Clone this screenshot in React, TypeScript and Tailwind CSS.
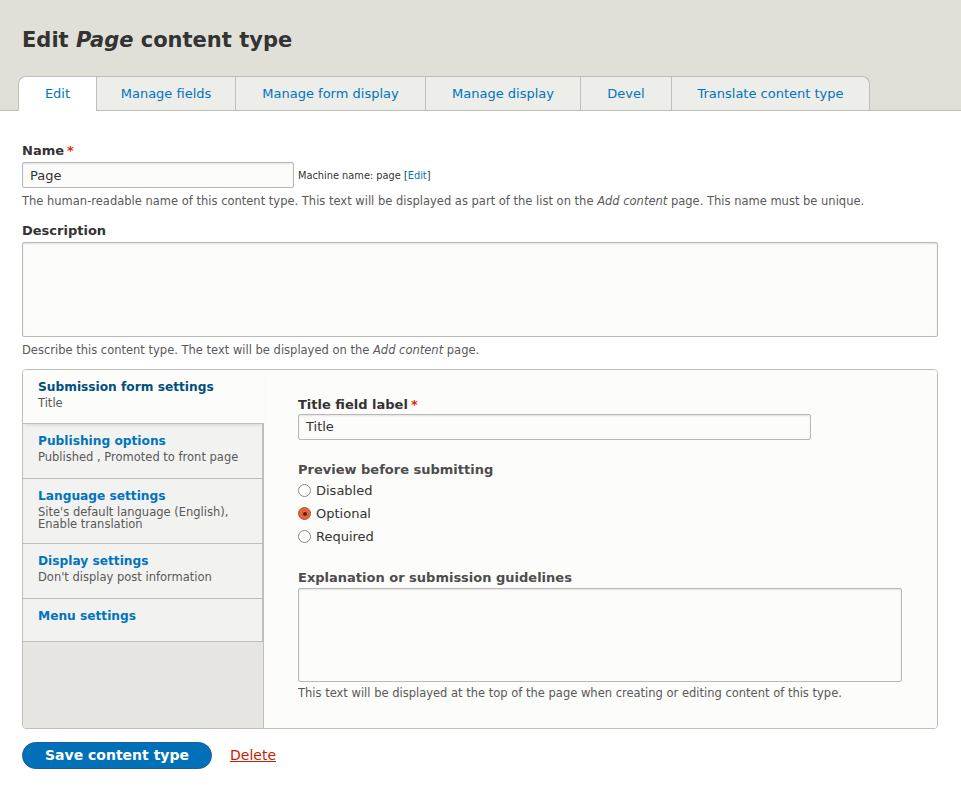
import React from "react";

const font = { fontFamily: '"DejaVu Sans", "Liberation Sans", sans-serif' };

function Tab({ label, active, last, w }: { label: string; active?: boolean; last?: boolean; w: string }) {
  return (
    <div
      className={
        "flex items-center justify-center border-t border-l border-[#bfbfba] text-[13px] text-[#0074bd] " +
        w +
        (active ? " bg-white rounded-tl-[8px] h-[35px] -mb-px" : " bg-[#ededea] h-[34px]") +
        (last ? " border-r rounded-tr-[8px]" : "")
      }
    >
      {label}
    </div>
  );
}

function Radio({ label, checked }: { label: string; checked?: boolean }) {
  return (
    <div className="flex items-center h-[23px] text-[13px] text-[#333]">
      {checked ? (
        <span className="w-[13px] h-[13px] rounded-full bg-[#e0663e] border border-[#c0502d] flex items-center justify-center mr-[5px]">
          <span className="w-[4px] h-[4px] rounded-full bg-[#5a2010]" />
        </span>
      ) : (
        <span className="w-[13px] h-[13px] rounded-full bg-white border border-[#8a8a8a] mr-[5px]" />
      )}
      <span>{label}</span>
    </div>
  );
}

function VTab({ title, sub, active, h }: { title: string; sub?: React.ReactNode; active?: boolean; h: string }) {
  return (
    <div
      className={
        "px-[15px] pt-[9px] border-b border-[#bfbfba] " +
        h +
        (active ? " bg-[#fcfcfa] mr-[-1px] relative z-10 shadow-[0_3px_4px_-2px_rgba(0,0,0,0.12)]" : " bg-[#f2f2f0] border-r border-[#bfbfba]")
      }
    >
      <div className={"text-[12.2px] font-bold leading-[16px] " + (active ? "text-[#004f80]" : "text-[#0074bd]")}>{title}</div>
      {sub && <div className="text-[11.5px] leading-[12px] text-[#595959] mt-[2px]">{sub}</div>}
    </div>
  );
}

export default function App() {
  return (
    <div className="w-[961px] min-h-[789px] bg-white text-[#333]" style={font}>
      <div className="bg-[#e0e0d8] border-b border-[#bfbfba] h-[111px] px-[22px] flex flex-col">
        <h1 className="text-[21px] font-bold text-[#333] mt-[26px] leading-[28px]">
          Edit <em>Page</em> content type
        </h1>
        <div className="flex mt-auto -ml-[4px]">
          <Tab label="Edit" active w="w-[78px]" />
          <Tab label="Manage fields" w="w-[139px]" />
          <Tab label="Manage form display" w="w-[190px]" />
          <Tab label="Manage display" w="w-[155px]" />
          <Tab label="Devel" w="w-[91px]" />
          <Tab label="Translate content type" last w="w-[199px]" />
        </div>
      </div>

      <div className="px-[22px] pt-[30px]">
        <div className="text-[13px] font-bold leading-[18px] mt-[1px]">
          Name<span className="text-[#e62600] ml-[3px]">*</span>
        </div>
        <div className="flex items-center mt-[2px]">
          <div className="w-[272px] h-[26px] border border-[#b8b8b8] rounded-[2px] bg-[#fcfcfa] text-[13px] flex items-center px-[7px] pt-[1px] shadow-[inset_0_1px_2px_rgba(0,0,0,0.1)]">
            Page
          </div>
          <span className="text-[9.8px] ml-[4px] mt-[3px]">
            Machine name: page [<span className="text-[#0074bd]">Edit</span>]
          </span>
        </div>
        <div className="text-[11.5px] text-[#595959] mt-[5px] leading-[16px]">
          The human-readable name of this content type. This text will be displayed as part of the list on the <em>Add content</em> page. This name must be unique.
        </div>

        <div className="text-[13px] font-bold leading-[18px] mt-[13px]">Description</div>
        <div className="w-[916px] h-[95px] border border-[#b8b8b8] rounded-[2px] bg-[#fcfcfa] mt-[2px] shadow-[inset_0_1px_2px_rgba(0,0,0,0.1)]" />
        <div className="text-[11.5px] text-[#595959] mt-[5px] leading-[16px]">
          Describe this content type. The text will be displayed on the <em>Add content</em> page.
        </div>

        <div className="mt-[11px] w-[916px] h-[360px] border border-[#bfbfba] rounded-[4px] flex overflow-hidden">
          <div className="w-[241px] bg-[#e6e5e1] flex flex-col shrink-0 border-r border-[#bfbfba]">
            <VTab title="Submission form settings" sub="Title" active h="h-[54px]" />
            <VTab title="Publishing options" sub="Published , Promoted to front page" h="h-[55px]" />
            <VTab
              title="Language settings"
              sub={
                <>
                  Site's default language (English),
                  <br />
                  Enable translation
                </>
              }
              h="h-[65px]"
            />
            <VTab title="Display settings" sub="Don't display post information" h="h-[55px]" />
            <VTab title="Menu settings" h="h-[43px]" />
          </div>
          <div className="flex-1 bg-[#fcfcfa] pl-[34px] pt-[27px]">
            <div className="text-[13px] font-bold leading-[16px]">
              Title field label<span className="text-[#e62600] ml-[3px]">*</span>
            </div>
            <div className="w-[513px] h-[26px] border border-[#b8b8b8] rounded-[2px] bg-[#fcfcfa] text-[13px] flex items-center px-[7px] mt-[1px] shadow-[inset_0_1px_2px_rgba(0,0,0,0.1)]">
              Title
            </div>
            <div className="text-[13px] font-bold leading-[16px] mt-[22px] text-[#4d4d4d]">Preview before submitting</div>
            <div className="mt-[1px]">
              <Radio label="Disabled" />
              <Radio label="Optional" checked />
              <Radio label="Required" />
            </div>
            <div className="text-[13px] font-bold leading-[16px] mt-[22px] text-[#4d4d4d]">Explanation or submission guidelines</div>
            <div className="w-[604px] h-[94px] border border-[#b8b8b8] rounded-[2px] bg-[#fcfcfa] mt-[2px] shadow-[inset_0_1px_2px_rgba(0,0,0,0.1)]" />
            <div className="text-[11.5px] text-[#595959] mt-[3px] leading-[16px]">
              This text will be displayed at the top of the page when creating or editing content of this type.
            </div>
          </div>
        </div>

        <div className="flex items-center mt-[13px]">
          <div className="w-[190px] h-[27px] rounded-full bg-[#0071b8] border border-[#1e5c90] text-white text-[14px] font-bold flex items-center justify-center">
            Save content type
          </div>
          <span className="ml-[18px] text-[14px] text-[#c72100] underline">Delete</span>
        </div>
      </div>
    </div>
  );
}
